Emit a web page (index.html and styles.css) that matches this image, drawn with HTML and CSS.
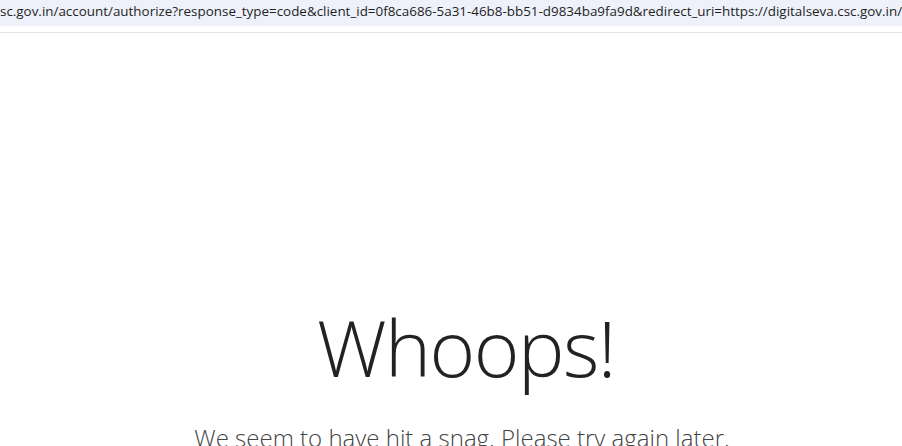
FILE: index.html
```html
<!DOCTYPE html>
<html>
<head>
<meta charset="utf-8">
<link rel="stylesheet" href="styles.css">
</head>
<body>
<div class="urlbar"><span class="url">sc.gov.in/account/authorize?response_type=code&amp;client_id=0f8ca686-5a31-46b8-bb51-d9834ba9fa9d&amp;redirect_uri=https://digitalseva.csc.gov.in/</span></div>
<div class="divider"></div>
<main class="content">
  <h1 class="title">Whoops!</h1>
  <p class="message">We seem to have hit a snag. Please try again later.</p>
</main>
</body>
</html>
```
FILE: styles.css
```css
html, body {
  margin: 0;
  padding: 0;
  background: #ffffff;
  overflow: hidden;
  width: 902px;
  height: 446px;
}
.urlbar {
  height: 26px;
  background: #eef1f9;
  overflow: hidden;
  white-space: nowrap;
  display: flex;
  align-items: center;
}
.url {
  font-family: "Open Sans", "Noto Sans", sans-serif;
  font-size: 13.42px;
  color: #1f1f1f;
  margin-top: -4px;
}
.divider {
  height: 6px;
  border-bottom: 1px solid #e3e3e3;
}
.content {
  text-align: center;
  padding-top: 264px;
  padding-left: 22px;
  font-family: "Open Sans", "Noto Sans", sans-serif;
  color: #222;
}
.title {
  margin: 0;
  font-size: 78px;
  font-weight: 300;
  line-height: 100px;
  letter-spacing: -1.5px;
  padding-left: 8px;
}
.message {
  margin: 24px 0 0;
  font-size: 24px;
  font-weight: 300;
  color: #444;
}
```
